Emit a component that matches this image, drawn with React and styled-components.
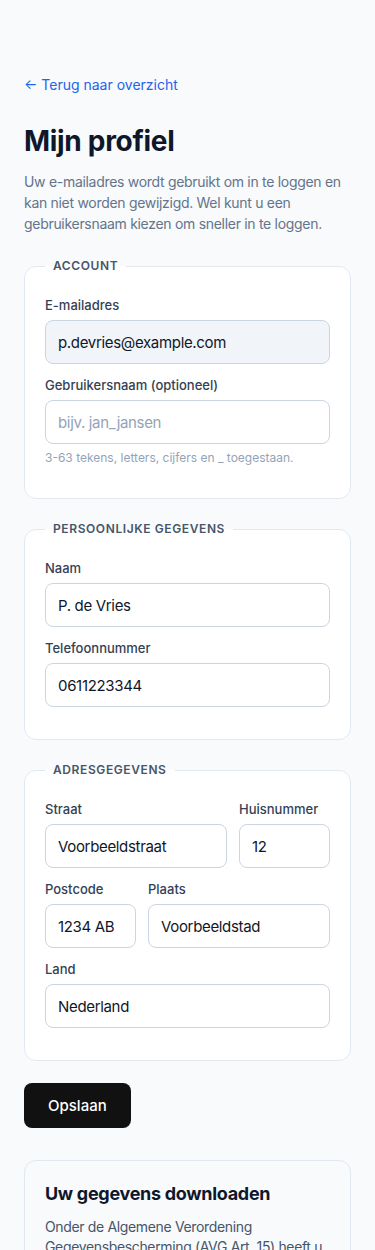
import React from 'react';
import styled, { createGlobalStyle } from 'styled-components';

const Global = createGlobalStyle`
	* { box-sizing: border-box; }
	body {
		margin: 0;
		background: #f8fafc;
		font-family: Inter, "Noto Sans", "Liberation Sans", sans-serif;
		color: #0f172a;
	}
`

const Page = styled.main`
	padding: 75px 24px 40px;
`

const BackLink = styled.a`
	display: block;
	font-size: 14px;
	line-height: 20px;
	color: #2563eb;
	text-decoration: none;
`

const Title = styled.h1`
	margin: 29px 0 0;
	font-size: 28px;
	line-height: 34px;
	font-weight: 700;
	letter-spacing: -0.3px;
	color: #0f172a;
`

const Intro = styled.p`
	margin: 13px 0 24px;
	font-size: 14px;
	line-height: 21px;
	letter-spacing: -0.3px;
	color: #64748b;
`

const Section = styled.fieldset`
	margin: 0 0 22px;
	padding: 22px 20px 20px;
	background: #fff;
	border: 1px solid #e2e8f0;
	border-radius: 12px;
	min-width: 0;
`

const Legend = styled.legend`
	padding: 0 8px;
	font-size: 12px;
	line-height: 16px;
	font-weight: 600;
	letter-spacing: 0.6px;
	text-transform: uppercase;
	color: #475569;
`

const Field = styled.div`
	margin-bottom: 12px;
	min-width: 0;
`

const Row = styled.div`
	display: grid;
	grid-template-columns: ${p => p.$cols};
	gap: 12px;
`

const Label = styled.label`
	display: block;
	margin-bottom: 6px;
	font-size: 13px;
	line-height: 18px;
	font-weight: 500;
	color: #334155;
`

const Input = styled.input`
	display: block;
	width: 100%;
	height: 44px;
	padding: 0 12px;
	font-family: inherit;
	font-size: 15px;
	letter-spacing: -0.33px;
	color: #0f172a;
	background: ${p => (p.disabled ? '#f1f5f9' : '#fff')};
	border: 1px solid #cbd5e1;
	border-radius: 8px;
	outline: none;
	-webkit-text-fill-color: #0f172a;
	opacity: 1;
	&::placeholder {
		color: #94a3b8;
		-webkit-text-fill-color: #94a3b8;
	}
`

const Hint = styled.p`
	margin: 6px 0 0;
	font-size: 12px;
	line-height: 16px;
	color: #94a3b8;
`

const SaveButton = styled.button`
	padding: 0 24px;
	height: 45px;
	font-family: inherit;
	font-size: 15px;
	font-weight: 500;
	color: #fff;
	background: #111;
	border: none;
	border-radius: 8px;
`

const InfoCard = styled.section`
	margin-top: 32px;
	padding: 20px 20px 24px;
	border: 1px solid #e2e8f0;
	border-radius: 12px;
	background: #f8fafc;
`

const InfoTitle = styled.h2`
	margin: 0 0 10px;
	font-size: 18px;
	line-height: 26px;
	font-weight: 700;
	letter-spacing: -0.3px;
	color: #0f172a;
`

const InfoText = styled.p`
	margin: 0;
	font-size: 14px;
	line-height: 20px;
	letter-spacing: -0.35px;
	color: #475569;
`

const App = () => {
	return (
		<Page>
			<Global />
			<BackLink href="#">← Terug naar overzicht</BackLink>
			<Title>Mijn profiel</Title>
			<Intro>
				Uw e-mailadres wordt gebruikt om in te loggen en kan niet worden gewijzigd. Wel kunt u een gebruikersnaam kiezen om sneller in te loggen.
			</Intro>

			<Section>
				<Legend>Account</Legend>
				<Field>
					<Label>E-mailadres</Label>
					<Input disabled value="p.devries@example.com" readOnly />
				</Field>
				<Field>
					<Label>Gebruikersnaam (optioneel)</Label>
					<Input placeholder="bijv. jan_jansen" />
					<Hint>3-63 tekens, letters, cijfers en _ toegestaan.</Hint>
				</Field>
			</Section>

			<Section>
				<Legend>Persoonlijke gegevens</Legend>
				<Field>
					<Label>Naam</Label>
					<Input defaultValue="P. de Vries" />
				</Field>
				<Field>
					<Label>Telefoonnummer</Label>
					<Input defaultValue="0611223344" />
				</Field>
			</Section>

			<Section>
				<Legend>Adresgegevens</Legend>
				<Row $cols="2fr 1fr">
					<Field>
						<Label>Straat</Label>
						<Input defaultValue="Voorbeeldstraat" />
					</Field>
					<Field>
						<Label>Huisnummer</Label>
						<Input defaultValue="12" />
					</Field>
				</Row>
				<Row $cols="1fr 2fr">
					<Field>
						<Label>Postcode</Label>
						<Input defaultValue="1234 AB" />
					</Field>
					<Field>
						<Label>Plaats</Label>
						<Input defaultValue="Voorbeeldstad" />
					</Field>
				</Row>
				<Field>
					<Label>Land</Label>
					<Input defaultValue="Nederland" />
				</Field>
			</Section>

			<SaveButton>Opslaan</SaveButton>

			<InfoCard>
				<InfoTitle>Uw gegevens downloaden</InfoTitle>
				<InfoText>
					Onder de Algemene Verordening Gegevensbescherming (AVG Art. 15) heeft u het recht om een kopie van uw gegevens op te vragen.
				</InfoText>
			</InfoCard>
		</Page>
	);
}

export default App;
